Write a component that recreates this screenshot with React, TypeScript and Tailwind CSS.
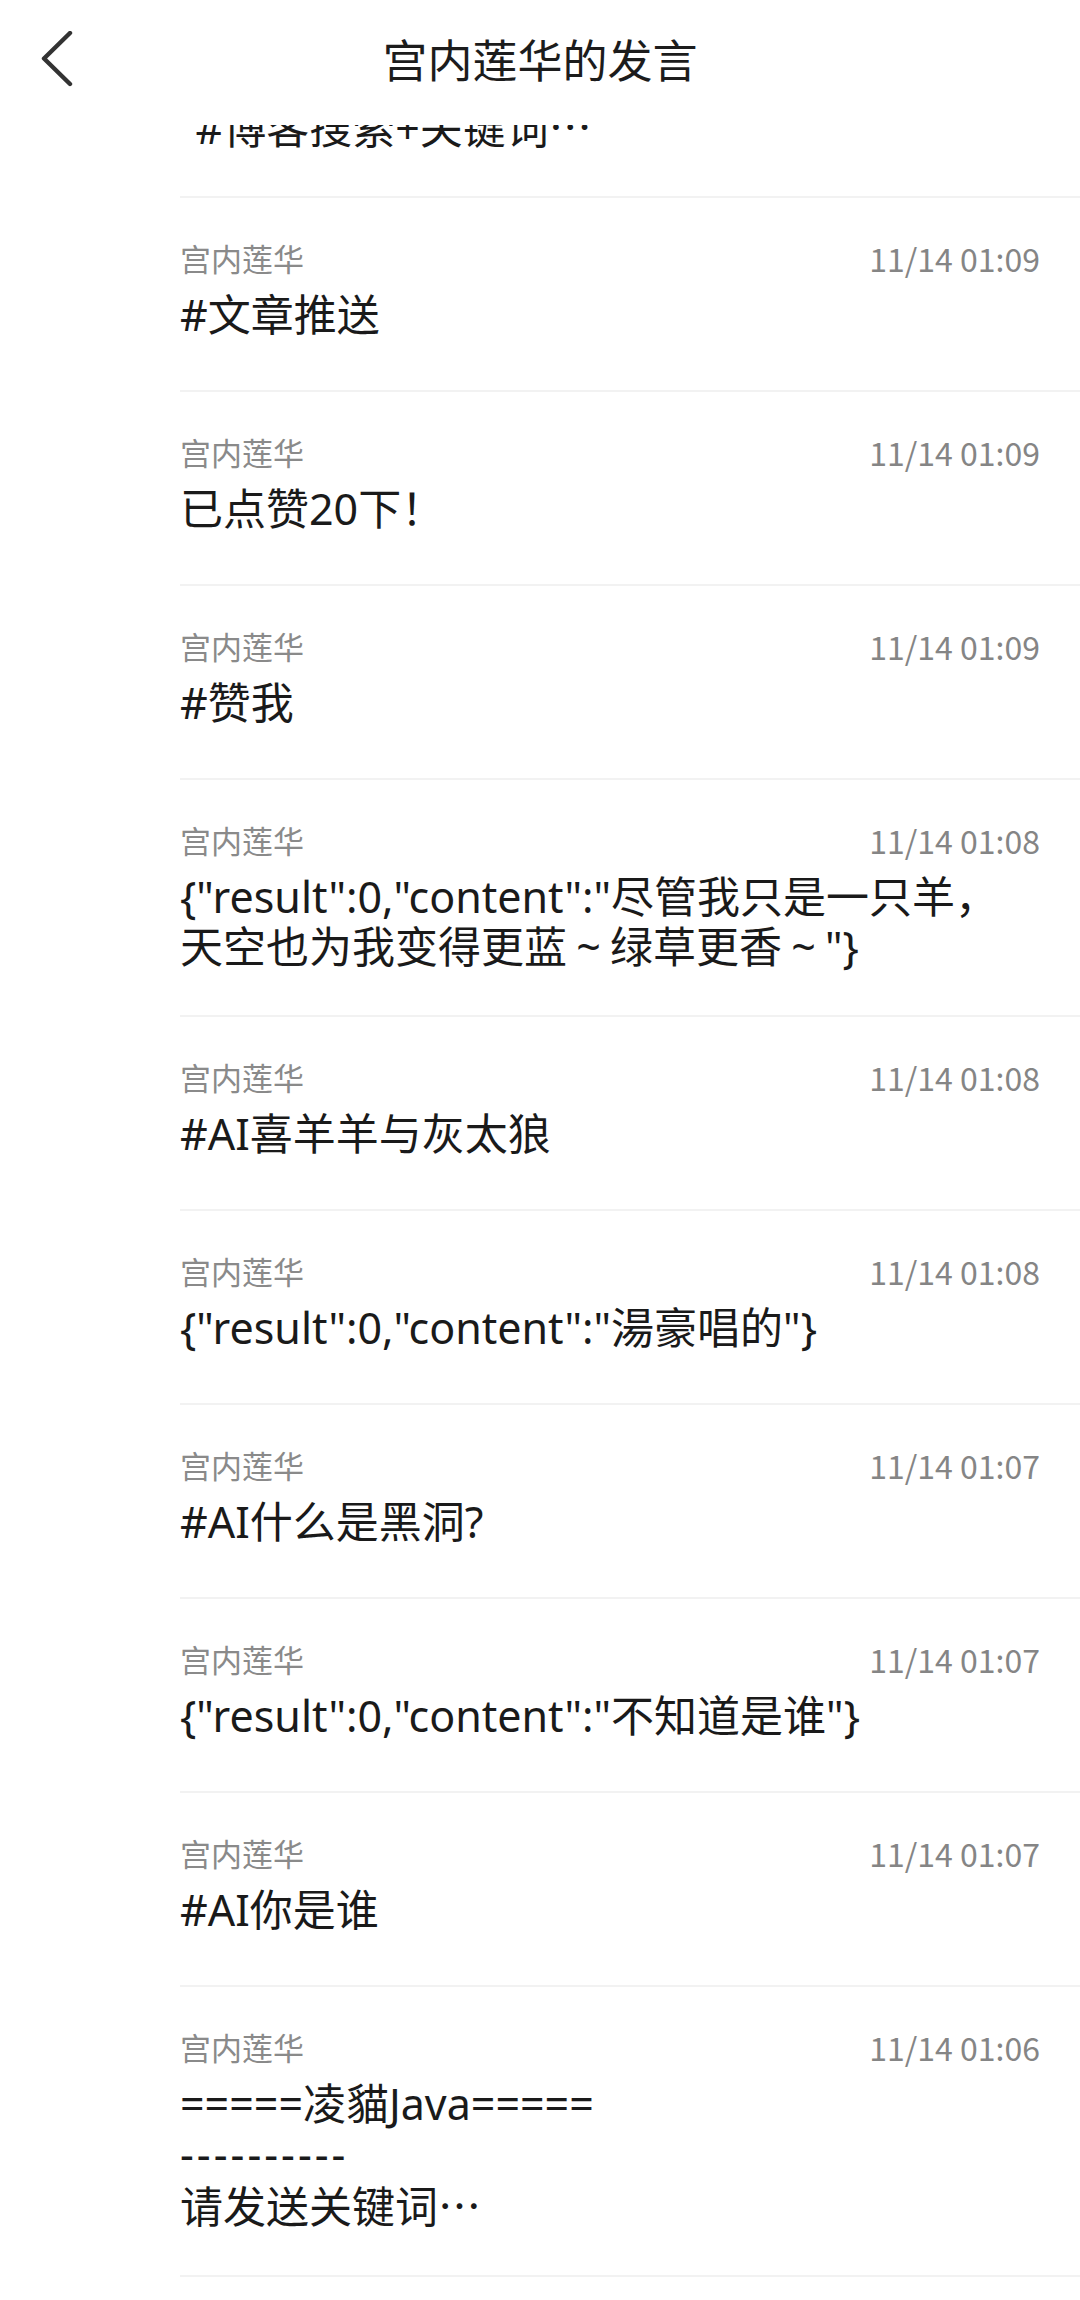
import React from "react";

interface Message {
  id: number;
  name: string;
  time: string;
  content: string;
}

const messages: Message[] = [
  { id: 1, name: "宫内莲华", time: "11/14 01:09", content: "=====凌貓Java=====\n----------\n“#博客搜索+关键词…" },
  { id: 2, name: "宫内莲华", time: "11/14 01:09", content: "#文章推送" },
  { id: 3, name: "宫内莲华", time: "11/14 01:09", content: "已点赞20下！" },
  { id: 4, name: "宫内莲华", time: "11/14 01:09", content: "#赞我" },
  {
    id: 5,
    name: "宫内莲华",
    time: "11/14 01:08",
    content: '{"result":0,"content":"尽管我只是一只羊，\n天空也为我变得更蓝～绿草更香～"}',
  },
  { id: 6, name: "宫内莲华", time: "11/14 01:08", content: "#AI喜羊羊与灰太狼" },
  { id: 7, name: "宫内莲华", time: "11/14 01:08", content: '{"result":0,"content":"湯豪唱的"}' },
  { id: 8, name: "宫内莲华", time: "11/14 01:07", content: "#AI什么是黑洞?" },
  { id: 9, name: "宫内莲华", time: "11/14 01:07", content: '{"result":0,"content":"不知道是谁"}' },
  { id: 10, name: "宫内莲华", time: "11/14 01:07", content: "#AI你是谁" },
  { id: 11, name: "宫内莲华", time: "11/14 01:06", content: "=====凌貓Java=====\n----------\n请发送关键词…" },
  { id: 12, name: "宫内莲华", time: "11/14 01:06", content: "#菜单" },
];

// 省略号用中文字体（点居中），全角波浪号画成小号居中
const renderLine = (line: string) =>
  line.split(/(…|～)/).map((part, i) => {
    if (part === "…") {
      return (
        <span key={i} className="font-['Noto_Sans_CJK_SC',sans-serif]">
          …
        </span>
      );
    }
    if (part === "～") {
      return (
        <span key={i} className="inline-block w-[43px] text-center">
          ~
        </span>
      );
    }
    return <React.Fragment key={i}>{part}</React.Fragment>;
  });

const MessageRow: React.FC<{ msg: Message }> = ({ msg }) => (
  <div className="ml-[180px] min-h-[194px] pr-[40px] pt-[42px] pb-[43px] border-b-2 border-[#f2f2f2]">
    <div className="flex items-center justify-between h-[36px]">
      <span className="text-[31px] leading-[36px] text-[#8a8a8a] font-['Noto_Sans_CJK_SC',sans-serif]">
        {msg.name}
      </span>
      <span className="text-[32px] leading-[36px] text-[#858585] font-['Noto_Sans_CJK_SC',sans-serif]">
        {msg.time}
      </span>
    </div>
    <div className="mt-[14px] text-[43px] leading-[50px] text-[#1a1a1a] font-['Noto_Sans','Noto_Sans_CJK_SC',sans-serif]">
      {msg.content.split("\n").map((line, i) => (
        <p key={i} className={/^-+$/.test(line) ? "tracking-[3px]" : ""}>
          {renderLine(line)}
        </p>
      ))}
    </div>
  </div>
);

export default function App() {
  return (
    <div className="w-[1080px] h-[2300px] bg-white overflow-hidden flex flex-col">
      {/* 顶部标题栏 */}
      <div className="h-[125px] shrink-0 grid grid-cols-[1fr_auto_1fr] items-center pb-2 bg-white">
        <div className="pl-[40px] flex items-center">
          <svg width="34" height="56" viewBox="0 0 34 56" fill="none">
            <path d="M30 2 L4 27.5 L30 53" stroke="#333333" strokeWidth="4.4" strokeLinecap="round" strokeLinejoin="round" />
          </svg>
        </div>
        <h1 className="text-[45px] leading-[56px] text-[#1c1c1c] font-normal font-['Noto_Sans_CJK_SC',sans-serif]">
          宫内莲华的发言
        </h1>
        <div />
      </div>

      {/* 消息列表（已滚动） */}
      <div className="flex-1 overflow-hidden">
        <div className="-mt-[217px]">
          {messages.map((m) => (
            <MessageRow key={m.id} msg={m} />
          ))}
        </div>
      </div>
    </div>
  );
}
